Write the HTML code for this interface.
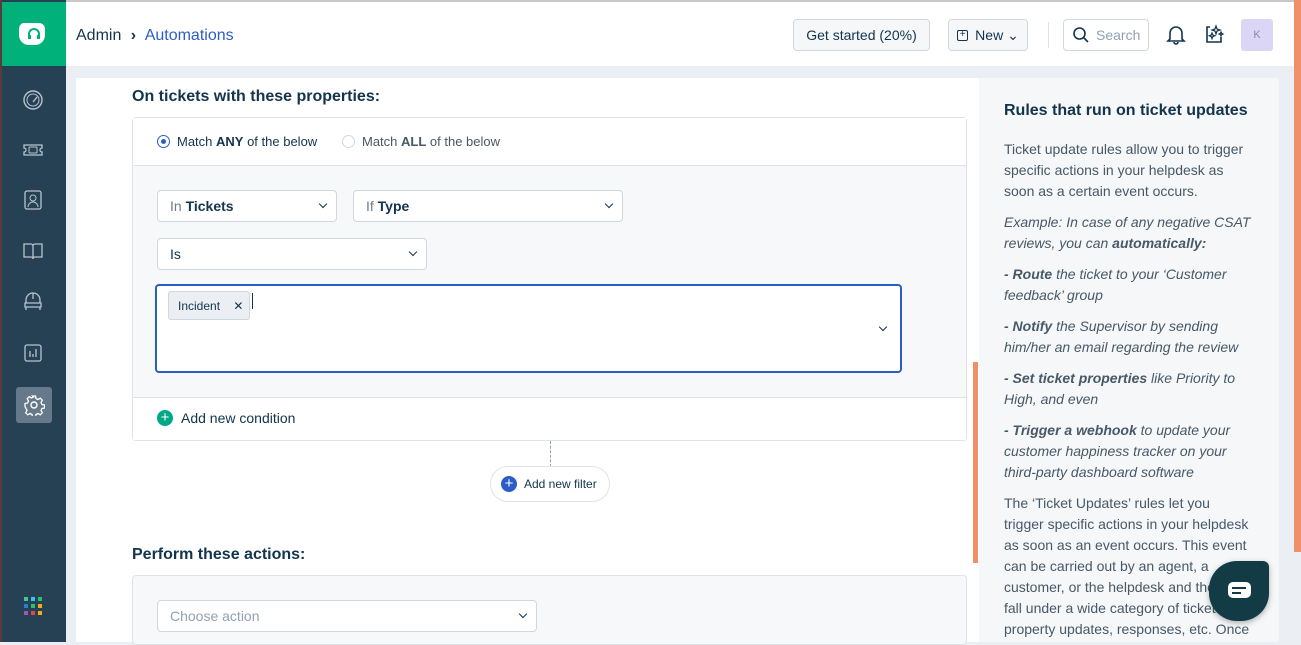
<!DOCTYPE html>
<html><head><meta charset="utf-8"><style>
*{box-sizing:border-box;margin:0;padding:0}
body{width:1301px;height:642px;overflow:hidden;font-family:"Liberation Sans",sans-serif;background:#ebeef3;position:relative;color:#12344d}
.abs{position:absolute}
.side{left:0;top:0;width:66px;height:642px;background:#264153;border-left:2px solid #5a3a3a}
.logo{left:2px;top:2px;width:64px;height:64px;background:#00b27a}
.hdr{left:66px;top:2px;width:1235px;height:64px;background:#fff}
.topline{left:0;top:0;width:1301px;height:2px;background:#c8c8c8}
.btn{border:1px solid #cfd7df;border-radius:4px;background:#f5f7f9;font-size:14px;color:#12344d;display:flex;align-items:center;justify-content:center}
.main{left:76px;top:78px;width:903px;height:564px;background:#fff}
.rp{left:979px;top:78px;width:300px;height:564px;background:#f5f7f9;padding:22px 25px;font-size:14px;line-height:21px;color:#475867}
.rp p{margin-bottom:10px}
.sel{border:1px solid #cfd7df;border-radius:4px;background:#fff;font-size:14px;display:flex;align-items:center;padding-left:12px}
.chev{position:absolute;right:10px;top:50%;margin-top:-5px;width:6px;height:6px;border-right:1.5px solid #12344d;border-bottom:1.5px solid #12344d;transform:rotate(45deg)}
h3{font-size:16px;font-weight:bold;color:#12344d}
</style></head><body>
<div class="abs topline"></div>
<div class="abs side"></div>
<div class="abs logo"><svg width="64" height="64"><path d="M22 22h16a6 6 0 0 1 6 6v6a10 10 0 0 1-10 10h-6a10 10 0 0 1-10-10v-6a6 6 0 0 1 4-6z" fill="#fff" transform="translate(-1,-1)"/><path d="M27 36v-4a5 5 0 0 1 10 0v4" stroke="#00b27a" stroke-width="2" fill="none"/><rect x="26" y="33" width="3" height="4" fill="#00b27a"/><rect x="35" y="33" width="3" height="4" fill="#00b27a"/></svg></div>
<div class="abs hdr"></div>
<div class="abs" style="left:76px;top:27px;font-size:16px;color:#12344d">Admin <span style="font-size:16px;font-weight:bold;margin:0 5px">›</span> <span style="color:#2c5cc5">Automations</span></div>
<div class="abs btn" style="left:793px;top:19px;width:137px;height:32px">Get started (20%)</div>
<div class="abs btn" style="left:948px;top:19px;width:80px;height:32px"><span style="display:inline-block;width:11px;height:11px;border:1.3px solid #12344d;border-radius:2px;margin-right:7px;font-size:10px;line-height:8px;text-align:center">+</span>New ⌄</div>
<div class="abs" style="left:1048px;top:22px;width:1px;height:26px;background:#dfe3e8"></div>
<div class="abs btn" style="left:1063px;top:19px;width:86px;height:32px;background:#fff;color:#92a2b1;justify-content:flex-start;padding-left:8px"><svg width="18" height="18" style="margin-right:6px"><circle cx="7.5" cy="7.5" r="5.5" stroke="#12344d" stroke-width="1.6" fill="none"/><path d="M11.5 11.5l4.5 4.5" stroke="#12344d" stroke-width="1.6"/></svg>Search</div>
<svg class="abs" style="left:1164px;top:22px" width="24" height="24"><path d="M6 17V11a6 6 0 0 1 12 0v6l2 2H4z M10 20a2 2 0 0 0 4 0" stroke="#12344d" stroke-width="1.6" fill="none"/></svg>
<svg class="abs" style="left:1202px;top:22px" width="24" height="24"><path d="M8 5H5v15h14v-5" stroke="#12344d" stroke-width="1.6" fill="none"/><path d="M14 4l1 3 3 1-3 1-1 3-1-3-3-1 3-1z M10 11l.8 2 2 .8-2 .8-.8 2-.8-2-2-.8 2-.8z M19 10l.6 1.4 1.4.6-1.4.6-.6 1.4-.6-1.4-1.4-.6 1.4-.6z" stroke="#12344d" stroke-width="1.2" fill="none"/></svg>
<div class="abs" style="left:1241px;top:19px;width:32px;height:32px;background:#dcd6f6;border-radius:3px;color:#8a84b5;font-size:11px;display:flex;align-items:center;justify-content:center">K</div>
<div class="abs" style="left:1294px;top:0;width:7px;height:552px;background:#f0906a"></div>
<div class="abs" style="left:1279px;top:66px;width:15px;height:576px;background:#ebeef3"></div>
<svg class="abs" style="left:22px;top:89px" width="22" height="22"><circle cx="11" cy="11" r="9" stroke="#b8c4cf" stroke-width="1.4" fill="none"/><circle cx="11" cy="11" r="6" stroke="#b8c4cf" stroke-width="1" fill="none"/><path d="M11 13l4-5" stroke="#b8c4cf" stroke-width="1.4"/></svg>
<svg class="abs" style="left:22px;top:139px" width="22" height="22"><path d="M2 6h18v3a2 2 0 0 0 0 4v3H2v-3a2 2 0 0 0 0-4z" stroke="#b8c4cf" stroke-width="1.3" fill="none"/><rect x="7" y="8" width="8" height="6" rx="1" stroke="#b8c4cf" fill="none"/></svg>
<svg class="abs" style="left:22px;top:189px" width="22" height="22"><rect x="3" y="2" width="16" height="18" rx="2" stroke="#b8c4cf" stroke-width="1.3" fill="none"/><circle cx="11" cy="9" r="3" stroke="#b8c4cf" fill="none"/><path d="M6 18a5 5 0 0 1 10 0" stroke="#b8c4cf" fill="none"/></svg>
<svg class="abs" style="left:22px;top:240px" width="22" height="22"><path d="M2 4h7a2 2 0 0 1 2 2v13a2 2 0 0 0-2-2H2z M20 4h-7a2 2 0 0 0-2 2v13a2 2 0 0 1 2-2h7z" stroke="#b8c4cf" stroke-width="1.3" fill="none"/></svg>
<svg class="abs" style="left:22px;top:290px" width="22" height="22"><path d="M4 10a7 7 0 0 1 14 0v3H4z M3 13h16v4H3z M4 17v3 M18 17v3 M11 3v6" stroke="#b8c4cf" stroke-width="1.3" fill="none"/></svg>
<svg class="abs" style="left:22px;top:342px" width="22" height="22"><rect x="3" y="3" width="16" height="16" rx="2" stroke="#b8c4cf" stroke-width="1.3" fill="none"/><path d="M8 9v6 M11 12v3 M14 7v8" stroke="#b8c4cf" stroke-width="1.3"/></svg>
<div class="abs" style="left:16px;top:387px;width:36px;height:36px;background:#65798a;border-radius:3px"></div>
<svg class="abs" style="left:23px;top:394px" width="22" height="22"><circle cx="11" cy="11" r="3" stroke="#fff" stroke-width="1.4" fill="none"/><path d="M9.5 2h3l.5 2.5 2 1 2.3-1.3 2 2-1.3 2.3 1 2 2.5.5v3l-2.5.5-1 2 1.3 2.3-2 2-2.3-1.3-2 1-.5 2.5h-3l-.5-2.5-2-1-2.3 1.3-2-2 1.3-2.3-1-2L2 12.5v-3l2.5-.5 1-2-1.3-2.3 2-2 2.3 1.3 2-1z" stroke="#fff" stroke-width="1.3" fill="none"/></svg>
<svg class="abs" style="left:24px;top:597px" width="20" height="20"><rect x="0" y="0" width="4" height="4" fill="#3fc8a0"/><rect x="7" y="0" width="4" height="4" fill="#36c5e8"/><rect x="14" y="0" width="4" height="4" fill="#2ebf6a"/><rect x="0" y="7" width="4" height="4" fill="#2a7fd0"/><rect x="7" y="7" width="4" height="4" fill="#2ebf6a"/><rect x="14" y="7" width="4" height="4" fill="#f5a623"/><rect x="0" y="14" width="4" height="4" fill="#9b59b6"/><rect x="7" y="14" width="4" height="4" fill="#e04848"/><rect x="14" y="14" width="4" height="4" fill="#f5a623"/></svg>
<div class="abs main"></div>
<h3 class="abs" style="left:132px;top:88px">On tickets with these properties:</h3>
<div class="abs" style="left:132px;top:117px;width:835px;height:324px;border:1px solid #dfe3e8;border-radius:4px;background:#f7f8f9"></div>
<div class="abs" style="left:133px;top:118px;width:833px;height:48px;background:#fff;border-bottom:1px solid #dfe3e8;font-size:13px;color:#475867">
<span class="abs" style="left:24px;top:17px;width:13px;height:13px;border:1.5px solid #2c5cc5;border-radius:50%"><span class="abs" style="left:2.5px;top:2.5px;width:5px;height:5px;border-radius:50%;background:#2c5cc5"></span></span>
<span class="abs" style="left:44px;top:16px;color:#12344d">Match <b>ANY</b> of the below</span>
<span class="abs" style="left:209px;top:17px;width:13px;height:13px;border:1px solid #cfd7df;border-radius:50%"></span>
<span class="abs" style="left:229px;top:16px">Match <b>ALL</b> of the below</span>
</div>
<div class="abs sel" style="left:157px;top:190px;width:180px;height:32px"><span style="color:#6f7c87">In&nbsp;</span><b>Tickets</b><i class="chev"></i></div>
<div class="abs sel" style="left:353px;top:190px;width:270px;height:32px"><span style="color:#6f7c87">If&nbsp;</span><b>Type</b><i class="chev"></i></div>
<div class="abs sel" style="left:157px;top:238px;width:270px;height:32px">Is<i class="chev"></i></div>
<div class="abs" style="left:155px;top:284px;width:747px;height:89px;border:2px solid #2c5cc5;border-radius:4px;background:#fff"><i class="chev" style="right:14px"></i></div>
<div class="abs" style="left:168px;top:291px;width:82px;height:29px;background:#ebeff3;border:1px solid #cfd7df;border-radius:3px;font-size:12px;padding:7px 0 0 9px;color:#12344d">Incident <span style="margin-left:10px">✕</span></div>
<div class="abs" style="left:252px;top:293px;width:1px;height:16px;background:#12344d"></div>
<div class="abs" style="left:133px;top:397px;width:833px;height:43px;background:#fff;border-top:1px solid #dfe3e8"></div>
<div class="abs" style="left:157px;top:410px;width:16px;height:16px;border-radius:50%;background:#00a886;color:#fff;font-size:15px;line-height:15px;text-align:center">+</div>
<div class="abs" style="left:181px;top:410px;font-size:14px;color:#12344d">Add new condition</div>
<div class="abs" style="left:550px;top:441px;height:26px;border-left:1px dashed #92a2b1"></div>
<div class="abs" style="left:490px;top:466px;width:120px;height:36px;border:1px solid #dfe3e8;border-radius:18px;background:#fff;font-size:12px;color:#12344d;padding:10px 0 0 33px">Add new filter</div>
<div class="abs" style="left:501px;top:476px;width:16px;height:16px;border-radius:50%;background:#2c5cc5;color:#fff;font-size:15px;line-height:15px;text-align:center">+</div>
<h3 class="abs" style="left:132px;top:546px">Perform these actions:</h3>
<div class="abs" style="left:132px;top:575px;width:835px;height:70px;border:1px solid #dfe3e8;border-radius:4px;background:#f7f8f9"></div>
<div class="abs sel" style="left:157px;top:600px;width:380px;height:32px;color:#92a2b1">Choose action<i class="chev"></i></div>
<div class="abs" style="left:973px;top:362px;width:5px;height:201px;background:#f0906a"></div>
<div class="abs rp">
<div style="font-size:16px;font-weight:bold;color:#12344d;margin-bottom:18px">Rules that run on ticket updates</div>
<p>Ticket update rules allow you to trigger specific actions in your helpdesk as soon as a certain event occurs.</p>
<p><i>Example: In case of any negative CSAT reviews, you can <b>automatically:</b></i></p>
<p><i><b>- Route</b> the ticket to your ‘Customer feedback’ group</i></p>
<p><i><b>- Notify</b> the Supervisor by sending him/her an email regarding the review</i></p>
<p><i><b>- Set ticket properties</b> like Priority to High, and even</i></p>
<p><i><b>- Trigger a webhook</b> to update your customer happiness tracker on your third-party dashboard software</i></p>
<p style="white-space:nowrap">The ‘Ticket Updates’ rules let you<br>trigger specific actions in your helpdesk<br>as soon as an event occurs. This event<br>can be carried out by an agent, a<br>customer, or the helpdesk and they<br>fall under a wide category of ticket<br>property updates, responses, etc. Once</p>
</div>
<div class="abs" style="left:1209px;top:561px;width:60px;height:60px;background:#133b46;border-radius:28px 6px 28px 28px;box-shadow:0 2px 6px rgba(0,0,0,.3)"><div class="abs" style="left:19px;top:21px;width:23px;height:16px;background:#fff;border-radius:5px"></div><div class="abs" style="left:23px;top:26px;width:14px;height:2px;background:#133b46"></div><div class="abs" style="left:23px;top:31px;width:9px;height:2px;background:#133b46"></div></div>
</body></html>
